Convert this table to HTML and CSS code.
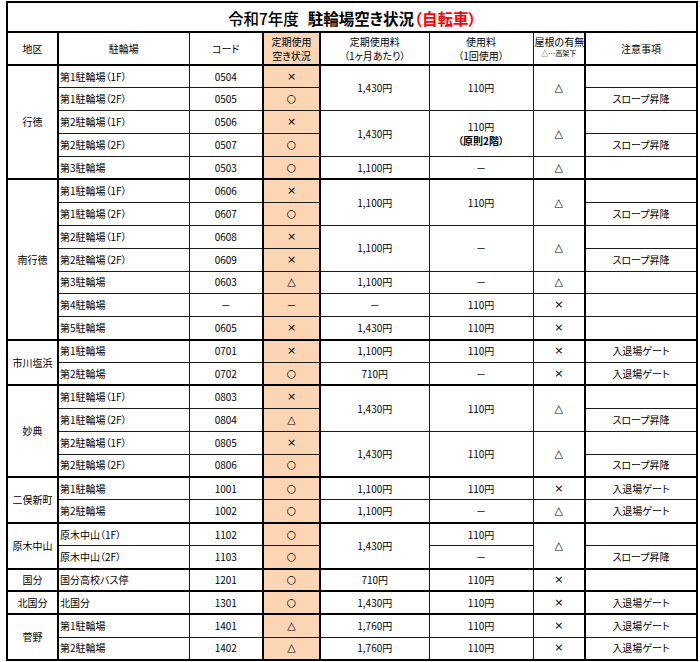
FILE: index.html
```html
<!DOCTYPE html>
<html lang="ja">
<head>
<meta charset="utf-8">
<title>令和7年度 駐輪場空き状況（自転車）</title>
<link rel="stylesheet" href="styles.css">
</head>
<body>
<table class="sheet">
  <colgroup>
    <col class="c-area">
    <col class="c-name">
    <col class="c-code">
    <col class="c-vac">
    <col class="c-month">
    <col class="c-once">
    <col class="c-roof">
    <col class="c-note">
  </colgroup>
  <tr class="title-row">
    <td colspan="8" class="title"><span class="t1">令和7年度</span><span class="t2">駐輪場空き状況</span><span class="t3">（自転車）</span></td>
  </tr>
  <tr class="head-row">
    <td>地区</td>
    <td>駐輪場</td>
    <td>コード</td>
    <td class="vac-h">定期使用<br>空き状況</td>
    <td>定期使用料<br>（1ヶ月あたり）</td>
    <td>使用料<br>（1回使用）</td>
    <td class="roof">屋根の有無<br><span class="small">△…高架下</span></td>
    <td>注意事項</td>
  </tr>

  <!-- 行徳 -->
  <tr class="r g">
    <td rowspan="5" class="area">行徳</td>
    <td class="name">第1駐輪場（1F）</td><td>0504</td><td class="vac">×</td>
    <td rowspan="2">1,430円</td><td rowspan="2">110円</td><td rowspan="2" class="s">△</td><td></td>
  </tr>
  <tr class="r">
    <td class="name">第1駐輪場（2F）</td><td>0505</td><td class="vac">○</td><td>スロープ昇降</td>
  </tr>
  <tr class="r">
    <td class="name">第2駐輪場（1F）</td><td>0506</td><td class="vac">×</td>
    <td rowspan="2">1,430円</td><td rowspan="2" class="two">110円<br><b>（原則2階）</b></td><td rowspan="2" class="s">△</td><td></td>
  </tr>
  <tr class="r">
    <td class="name">第2駐輪場（2F）</td><td>0507</td><td class="vac">○</td><td>スロープ昇降</td>
  </tr>
  <tr class="r">
    <td class="name">第3駐輪場</td><td>0503</td><td class="vac">○</td>
    <td>1,100円</td><td>－</td><td class="s">△</td><td></td>
  </tr>

  <!-- 南行徳 -->
  <tr class="r g">
    <td rowspan="7" class="area">南行徳</td>
    <td class="name">第1駐輪場（1F）</td><td>0606</td><td class="vac">×</td>
    <td rowspan="2">1,100円</td><td rowspan="2">110円</td><td rowspan="2" class="s">△</td><td></td>
  </tr>
  <tr class="r">
    <td class="name">第1駐輪場（2F）</td><td>0607</td><td class="vac">○</td><td>スロープ昇降</td>
  </tr>
  <tr class="r">
    <td class="name">第2駐輪場（1F）</td><td>0608</td><td class="vac">×</td>
    <td rowspan="2">1,100円</td><td rowspan="2">－</td><td rowspan="2" class="s">△</td><td></td>
  </tr>
  <tr class="r">
    <td class="name">第2駐輪場（2F）</td><td>0609</td><td class="vac">×</td><td>スロープ昇降</td>
  </tr>
  <tr class="r">
    <td class="name">第3駐輪場</td><td>0603</td><td class="vac">△</td>
    <td>1,100円</td><td>－</td><td class="s">△</td><td></td>
  </tr>
  <tr class="r">
    <td class="name">第4駐輪場</td><td>－</td><td class="vac dash">－</td>
    <td>－</td><td>110円</td><td class="s">×</td><td></td>
  </tr>
  <tr class="r">
    <td class="name">第5駐輪場</td><td>0605</td><td class="vac">×</td>
    <td>1,430円</td><td>110円</td><td class="s">×</td><td></td>
  </tr>

  <!-- 市川塩浜 -->
  <tr class="r g">
    <td rowspan="2" class="area">市川塩浜</td>
    <td class="name">第1駐輪場</td><td>0701</td><td class="vac">×</td>
    <td>1,100円</td><td>110円</td><td class="s">×</td><td>入退場ゲート</td>
  </tr>
  <tr class="r">
    <td class="name">第2駐輪場</td><td>0702</td><td class="vac">○</td>
    <td>710円</td><td>－</td><td class="s">×</td><td>入退場ゲート</td>
  </tr>

  <!-- 妙典 -->
  <tr class="r g">
    <td rowspan="4" class="area">妙典</td>
    <td class="name">第1駐輪場（1F）</td><td>0803</td><td class="vac">×</td>
    <td rowspan="2">1,430円</td><td rowspan="2">110円</td><td rowspan="2" class="s">△</td><td></td>
  </tr>
  <tr class="r">
    <td class="name">第1駐輪場（2F）</td><td>0804</td><td class="vac">△</td><td>スロープ昇降</td>
  </tr>
  <tr class="r">
    <td class="name">第2駐輪場（1F）</td><td>0805</td><td class="vac">×</td>
    <td rowspan="2">1,430円</td><td rowspan="2">110円</td><td rowspan="2" class="s">△</td><td></td>
  </tr>
  <tr class="r">
    <td class="name">第2駐輪場（2F）</td><td>0806</td><td class="vac">○</td><td>スロープ昇降</td>
  </tr>

  <!-- 二俣新町 -->
  <tr class="r g">
    <td rowspan="2" class="area">二俣新町</td>
    <td class="name">第1駐輪場</td><td>1001</td><td class="vac">○</td>
    <td>1,100円</td><td>110円</td><td class="s">×</td><td>入退場ゲート</td>
  </tr>
  <tr class="r">
    <td class="name">第2駐輪場</td><td>1002</td><td class="vac">○</td>
    <td>1,100円</td><td>－</td><td class="s">△</td><td>入退場ゲート</td>
  </tr>

  <!-- 原木中山 -->
  <tr class="r g">
    <td rowspan="2" class="area">原木中山</td>
    <td class="name">原木中山（1F）</td><td>1102</td><td class="vac">○</td>
    <td rowspan="2">1,430円</td><td>110円</td><td rowspan="2" class="s">△</td><td></td>
  </tr>
  <tr class="r">
    <td class="name">原木中山（2F）</td><td>1103</td><td class="vac">○</td>
    <td>－</td><td>スロープ昇降</td>
  </tr>

  <!-- 国分 -->
  <tr class="r g">
    <td class="area">国分</td>
    <td class="name">国分高校バス停</td><td>1201</td><td class="vac">○</td>
    <td>710円</td><td>110円</td><td class="s">×</td><td></td>
  </tr>

  <!-- 北国分 -->
  <tr class="r g">
    <td class="area">北国分</td>
    <td class="name">北国分</td><td>1301</td><td class="vac">○</td>
    <td>1,430円</td><td>110円</td><td class="s">×</td><td>入退場ゲート</td>
  </tr>

  <!-- 菅野 -->
  <tr class="r g">
    <td rowspan="2" class="area">菅野</td>
    <td class="name">第1駐輪場</td><td>1401</td><td class="vac">△</td>
    <td>1,760円</td><td>110円</td><td class="s">×</td><td>入退場ゲート</td>
  </tr>
  <tr class="r">
    <td class="name">第2駐輪場</td><td>1402</td><td class="vac">△</td>
    <td>1,760円</td><td>110円</td><td class="s">×</td><td>入退場ゲート</td>
  </tr>
</table>
</body>
</html>
```

FILE: styles.css
```css
html, body {
  margin: 0;
  padding: 0;
  background: #ffffff;
}

body {
  font-family: "Noto Sans CJK JP", "Noto Sans", sans-serif;
  font-feature-settings: "palt";
  color: #000000;
}

.sheet {
  border-collapse: collapse;
  table-layout: fixed;
  width: 691px;
  margin: 1px 0 0 6px;
  border: 2px solid #000000;
  font-size: 10px;
  line-height: 14px;
}

.c-area  { width: 51px; border-right: 2px solid #000; }
.c-name  { width: 131px; }
.c-code  { width: 74px; border-right: 2px solid #000; }
.c-vac   { width: 57px; border-right: 2px solid #000; }
.c-month { width: 109px; }
.c-once  { width: 104px; }
.c-roof  { width: 52px; border-right: 2px solid #000; }
.c-note  { width: 112px; }

td {
  border: 1px solid #1a1a1a;
  padding: 0 1px;
  text-align: center;
  vertical-align: middle;
  white-space: nowrap;
  overflow: hidden;
}

.title-row { height: 30px; }
.title-row td {
  border-bottom: 2px solid #000;
  background: #ffffff;
  font-size: 15.5px;
  line-height: 20px;
  padding-top: 1px;
}
.t1 { font-weight: 500; margin-right: 9px; }
.t2 { font-weight: 700; }
.t3 { font-weight: 700; color: #ff0000; }

.head-row { height: 33px; }
.head-row td {
  border-bottom: 2px solid #000;
  line-height: 14px;
}

.small {
  display: inline-block;
  font-size: 7px;
  line-height: 9px;
  vertical-align: top;
}

.r { height: 22.9px; }

tr.g > td { border-top: 2px solid #000; }

.vac, .vac-h { background: #fcd5b4; }

.vac, .s {
  font-family: "DejaVu Sans", "Liberation Sans", sans-serif;
  font-size: 11px;
  font-weight: 400;
}

.vac.dash {
  font-family: "Noto Sans CJK JP", sans-serif;
  font-size: 10px;
}

.name {
  text-align: left;
  padding-left: 1px;
}

.area {
  font-size: 10px;
  padding: 0;
}
```
